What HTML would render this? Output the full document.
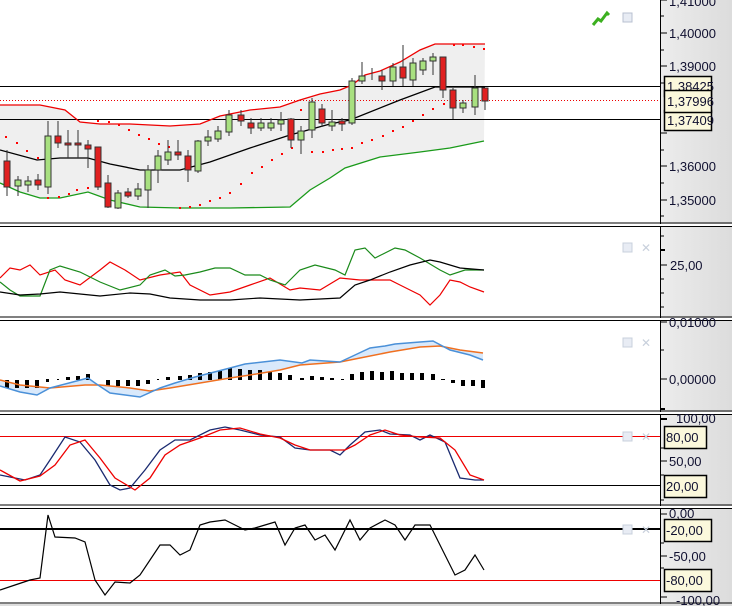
<!DOCTYPE html>
<html><head><meta charset="utf-8"><style>
html,body{margin:0;padding:0;background:#fff;width:732px;height:606px;overflow:hidden}
svg{display:block}
text{font-family:"Liberation Sans",sans-serif;font-size:13px;fill:#101030}
</style></head><body>
<svg width="732" height="606" viewBox="0 0 732 606" xmlns="http://www.w3.org/2000/svg">
<defs>
<linearGradient id="ax" x1="0" y1="0" x2="1" y2="0"><stop offset="0" stop-color="#ececec"/><stop offset="1" stop-color="#dcdcdc"/></linearGradient>
</defs>
<rect x="0" y="0" width="732" height="606" fill="#fff"/>
<rect x="661" y="0" width="71" height="606" fill="url(#ax)"/>
<line x1="660.5" y1="0" x2="660.5" y2="606" stroke="#000"/>

<!-- PANEL 1 -->
<polygon fill="#efefef" points="0,105 40,105 65,110 80,122 100,124 130,124 170,126 200,124 220,116 250,110 280,107 300,100 320,94 340,90 352,85 365,75 380,71 400,62 420,50 435,44 485,44 484,141 450,148 420,152 380,157 345,168 330,178 310,190 290,207 250,207 230,208 180,208 140,207 110,200 88,192 60,198 40,198 20,192 0,183"/>
<line x1="0" y1="86.5" x2="660" y2="86.5" stroke="#000"/>
<line x1="0" y1="119.5" x2="660" y2="119.5" stroke="#000"/>
<line x1="0" y1="100.5" x2="660" y2="100.5" stroke="#e00" stroke-dasharray="1,2"/>
<polyline fill="none" stroke="#e00" stroke-width="1.3" points="0,105 40,105 65,110 80,122 100,124 130,124 170,126 200,124 220,116 250,110 280,107 300,100 320,94 340,90 352,85 365,75 380,71 400,62 420,50 435,44 485,44"/>
<polyline fill="none" stroke="#000" stroke-width="1.3" points="0,150 37,160 60,158 88,158 110,164 140,170 180,170 210,162 250,148 290,135 330,124 350,120 400,100 435,87 485,87"/>
<polyline fill="none" stroke="#1a9a1a" stroke-width="1.3" points="0,183 20,192 40,198 60,198 88,192 110,200 140,207 180,208 230,208 290,207 310,190 330,178 345,168 380,157 420,152 450,148 484,141"/>
<g fill="#f00">
<rect x="5" y="136" width="2" height="2"/><rect x="16" y="142" width="2" height="2"/><rect x="26" y="150" width="2" height="2"/><rect x="37" y="157" width="2" height="2"/><rect x="47" y="197" width="2" height="2"/><rect x="58" y="196" width="2" height="2"/><rect x="68" y="193" width="2" height="2"/><rect x="76" y="189" width="2" height="2"/><rect x="87" y="187" width="2" height="2"/><rect x="97" y="120" width="2" height="2"/><rect x="108" y="121" width="2" height="2"/><rect x="118" y="124" width="2" height="2"/><rect x="128" y="129" width="2" height="2"/><rect x="138" y="134" width="2" height="2"/><rect x="148" y="138" width="2" height="2"/><rect x="158" y="143" width="2" height="2"/><rect x="168" y="146" width="2" height="2"/><rect x="179" y="207" width="2" height="2"/><rect x="189" y="206" width="2" height="2"/><rect x="199" y="204" width="2" height="2"/><rect x="209" y="200" width="2" height="2"/><rect x="219" y="197" width="2" height="2"/><rect x="229" y="192" width="2" height="2"/><rect x="240" y="183" width="2" height="2"/><rect x="251" y="172" width="2" height="2"/><rect x="261" y="166" width="2" height="2"/><rect x="271" y="159" width="2" height="2"/><rect x="281" y="153" width="2" height="2"/><rect x="291" y="147" width="2" height="2"/><rect x="300" y="109" width="2" height="2"/><rect x="311" y="151" width="2" height="2"/><rect x="322" y="151" width="2" height="2"/><rect x="332" y="149" width="2" height="2"/><rect x="341" y="148" width="2" height="2"/><rect x="351" y="147" width="2" height="2"/><rect x="361" y="142" width="2" height="2"/><rect x="371" y="139" width="2" height="2"/><rect x="382" y="135" width="2" height="2"/><rect x="392" y="130" width="2" height="2"/><rect x="402" y="126" width="2" height="2"/><rect x="412" y="120" width="2" height="2"/><rect x="422" y="114" width="2" height="2"/><rect x="432" y="108" width="2" height="2"/><rect x="443" y="103" width="2" height="2"/><rect x="453" y="44" width="2" height="2"/><rect x="462" y="44" width="2" height="2"/><rect x="473" y="46" width="2" height="2"/><rect x="483" y="48" width="2" height="2"/>
</g>
<g stroke="#333" stroke-width="1">
<!-- x, wickTop, wickBot, bodyTop, bodyBot, color -->
<line x1="7" y1="150" x2="7" y2="196"/><rect x="4" y="161" width="6" height="26" fill="#e02020"/>
<line x1="18" y1="176" x2="18" y2="196"/><rect x="15" y="180" width="6" height="6" fill="#a8e080"/>
<line x1="28" y1="176" x2="28" y2="192"/><rect x="25" y="181" width="6" height="4" fill="#a8e080"/>
<line x1="38" y1="174" x2="38" y2="190"/><rect x="35" y="180" width="6" height="5" fill="#e02020"/>
<line x1="48" y1="121" x2="48" y2="194"/><rect x="45" y="136" width="6" height="51" fill="#a8e080"/>
<line x1="58" y1="121" x2="58" y2="148"/><rect x="55" y="136" width="6" height="7" fill="#e02020"/>
<line x1="68" y1="130" x2="68" y2="158"/><rect x="65" y="143" width="6" height="2" fill="#e02020"/>
<line x1="78" y1="130" x2="78" y2="158"/><rect x="75" y="143" width="6" height="2" fill="#e02020"/>
<line x1="88" y1="140" x2="88" y2="168"/><rect x="85" y="145" width="6" height="4" fill="#e02020"/>
<line x1="98" y1="147" x2="98" y2="190"/><rect x="95" y="147" width="6" height="40" fill="#e02020"/>
<line x1="108" y1="175" x2="108" y2="208"/><rect x="105" y="183" width="6" height="24" fill="#e02020"/>
<line x1="118" y1="190" x2="118" y2="209"/><rect x="115" y="193" width="6" height="15" fill="#a8e080"/>
<line x1="128" y1="188" x2="128" y2="198"/><rect x="125" y="192" width="6" height="4" fill="#e02020"/>
<line x1="138" y1="183" x2="138" y2="200"/><rect x="135" y="189" width="6" height="7" fill="#a8e080"/>
<line x1="148" y1="165" x2="148" y2="208"/><rect x="145" y="170" width="6" height="20" fill="#a8e080"/>
<line x1="158" y1="150" x2="158" y2="183"/><rect x="155" y="156" width="6" height="14" fill="#a8e080"/>
<line x1="168" y1="140" x2="168" y2="165"/><rect x="165" y="152" width="6" height="8" fill="#a8e080"/>
<line x1="178" y1="140" x2="178" y2="160"/><rect x="175" y="152" width="6" height="3" fill="#e02020"/>
<line x1="188" y1="150" x2="188" y2="182"/><rect x="185" y="156" width="6" height="14" fill="#e02020"/>
<line x1="198" y1="140" x2="198" y2="173"/><rect x="195" y="141" width="6" height="30" fill="#a8e080"/>
<line x1="208" y1="130" x2="208" y2="146"/><rect x="205" y="137" width="6" height="4" fill="#a8e080"/>
<line x1="218" y1="126" x2="218" y2="142"/><rect x="215" y="131" width="6" height="8" fill="#a8e080"/>
<line x1="229" y1="110" x2="229" y2="136"/><rect x="226" y="115" width="6" height="17" fill="#a8e080"/>
<line x1="241" y1="110" x2="241" y2="126"/><rect x="238" y="115" width="6" height="6" fill="#e02020"/>
<line x1="251" y1="118" x2="251" y2="134"/><rect x="248" y="123" width="6" height="5" fill="#e02020"/>
<line x1="261" y1="118" x2="261" y2="131"/><rect x="258" y="123" width="6" height="5" fill="#a8e080"/>
<line x1="271" y1="118" x2="271" y2="131"/><rect x="268" y="123" width="6" height="5" fill="#a8e080"/>
<line x1="281" y1="112" x2="281" y2="131"/><rect x="278" y="120" width="6" height="4" fill="#a8e080"/>
<line x1="291" y1="118" x2="291" y2="148"/><rect x="288" y="119" width="6" height="21" fill="#e02020"/>
<line x1="301" y1="126" x2="301" y2="154"/><rect x="298" y="131" width="6" height="9" fill="#a8e080"/>
<line x1="312" y1="98" x2="312" y2="138"/><rect x="309" y="102" width="6" height="28" fill="#a8e080"/>
<line x1="322" y1="104" x2="322" y2="127"/><rect x="319" y="109" width="6" height="14" fill="#e02020"/>
<line x1="332" y1="110" x2="332" y2="131"/><rect x="329" y="122" width="6" height="4" fill="#a8e080"/>
<line x1="342" y1="118" x2="342" y2="131"/><rect x="339" y="121" width="6" height="3" fill="#e02020"/>
<line x1="352" y1="78" x2="352" y2="125"/><rect x="349" y="81" width="6" height="42" fill="#a8e080"/>
<line x1="362" y1="62" x2="362" y2="84"/><rect x="359" y="76" width="6" height="5" fill="#a8e080"/>
<line x1="372" y1="68" x2="372" y2="80"/>
<line x1="382" y1="70" x2="382" y2="90"/><rect x="379" y="76" width="6" height="5" fill="#e02020"/>
<line x1="393" y1="63" x2="393" y2="86"/><rect x="390" y="67" width="6" height="14" fill="#a8e080"/>
<line x1="403" y1="45" x2="403" y2="86"/><rect x="400" y="67" width="6" height="11" fill="#e02020"/>
<line x1="413" y1="58" x2="413" y2="86"/><rect x="410" y="63" width="6" height="17" fill="#a8e080"/>
<line x1="423" y1="58" x2="423" y2="75"/><rect x="420" y="61" width="6" height="9" fill="#a8e080"/>
<line x1="433" y1="53" x2="433" y2="75"/><rect x="430" y="57" width="6" height="4" fill="#a8e080"/>
<line x1="443" y1="57" x2="443" y2="98"/><rect x="440" y="57" width="6" height="33" fill="#e02020"/>
<line x1="453" y1="88" x2="453" y2="119"/><rect x="450" y="90" width="6" height="18" fill="#e02020"/>
<line x1="463" y1="100" x2="463" y2="113"/><rect x="460" y="103" width="6" height="5" fill="#a8e080"/>
<line x1="475" y1="75" x2="475" y2="115"/><rect x="472" y="88" width="6" height="19" fill="#a8e080"/>
<line x1="485" y1="88" x2="485" y2="110"/><rect x="482" y="88" width="6" height="13" fill="#e02020"/>
</g>
<!-- icon -->
<path d="M593,25 L598,19 L601,21 L607,13 L609,15" fill="none" stroke="#3cb020" stroke-width="3"/>
<rect x="623" y="13" width="9" height="9" fill="#e8ecf4" stroke="#b8c0d0"/>
<!-- axis 1 -->
<g stroke="#000">
<line x1="661" y1="0" x2="667" y2="0"/><line x1="661" y1="16" x2="664" y2="16"/><line x1="661" y1="33" x2="667" y2="33"/><line x1="661" y1="50" x2="664" y2="50"/><line x1="661" y1="66" x2="667" y2="66"/><line x1="661" y1="83" x2="664" y2="83"/><line x1="661" y1="133" x2="667" y2="133"/><line x1="661" y1="150" x2="664" y2="150"/><line x1="661" y1="166" x2="667" y2="166"/><line x1="661" y1="183" x2="664" y2="183"/><line x1="661" y1="200" x2="667" y2="200"/><line x1="661" y1="216" x2="664" y2="216"/>
</g>
<text x="669" y="6">1,41000</text>
<text x="669" y="38">1,40000</text>
<text x="669" y="71">1,39000</text>
<text x="669" y="171">1,36000</text>
<text x="669" y="205">1,35000</text>
<rect x="664.5" y="76.5" width="47" height="20" fill="#fbf8dc" stroke="#000" stroke-width="1.5"/>
<text x="667" y="91">1,38425</text>
<rect x="664.5" y="110.5" width="47" height="20" fill="#fbf8dc" stroke="#000" stroke-width="1.5"/>
<text x="667" y="125">1,37409</text>
<rect x="664.5" y="90.5" width="47" height="22" fill="#fbf8dc" stroke="#000" stroke-width="1.5"/>
<text x="667" y="106">1,37996</text>

<!-- separators -->
<g stroke="#000">
<line x1="0" y1="223" x2="732" y2="223"/><line x1="0" y1="226.5" x2="732" y2="226.5"/>
<line x1="0" y1="317" x2="732" y2="317"/><line x1="0" y1="320.5" x2="732" y2="320.5"/>
<line x1="0" y1="411" x2="732" y2="411"/><line x1="0" y1="414.5" x2="732" y2="414.5"/>
<line x1="0" y1="505" x2="732" y2="505"/><line x1="0" y1="508.5" x2="732" y2="508.5"/>
<line x1="0" y1="603" x2="732" y2="603"/>
</g>
<rect x="0" y="224" width="732" height="2" fill="#fff"/>
<rect x="0" y="318" width="732" height="2" fill="#fff"/>
<rect x="0" y="412" width="732" height="2" fill="#fff"/>
<rect x="0" y="506" width="732" height="2" fill="#fff"/>
<rect x="0" y="604" width="732" height="2" fill="#ddd"/>

<!-- PANEL 2 -->
<polyline fill="none" stroke="#e00" stroke-width="1.2" points="0,278 10,268 20,270 30,265 40,275 55,270 65,280 80,285 100,270 110,262 125,270 140,280 160,275 180,272 190,285 210,295 230,292 250,285 270,278 290,290 300,288 320,290 340,278 360,280 390,280 400,285 410,290 420,295 430,305 440,295 450,280 460,282 470,287 484,292"/>
<polyline fill="none" stroke="#1a8a1a" stroke-width="1.2" points="0,282 10,290 20,296 40,296 50,270 60,266 80,272 100,282 120,290 140,285 150,275 165,270 175,276 185,275 200,272 215,268 230,268 245,275 260,275 270,280 285,285 300,270 315,265 335,270 345,275 355,250 365,248 375,258 395,248 405,250 420,258 440,270 450,275 465,270 484,270"/>
<polyline fill="none" stroke="#000" stroke-width="1.2" points="0,292 20,295 40,294 60,292 80,294 100,296 130,293 150,294 170,298 200,300 230,300 260,298 300,300 340,298 355,285 370,280 390,272 410,265 430,260 440,262 460,268 484,270"/>
<rect x="623" y="243" width="9" height="9" fill="#e8ecf4" stroke="#c8d0dc"/>
<text x="641" y="252" style="font-size:12px;fill:#c8d0dc">✕</text>
<g stroke="#000"><line x1="661" y1="236" x2="664" y2="236"/><line x1="661" y1="250" x2="665" y2="250" stroke-width="2"/><line x1="661" y1="265" x2="667" y2="265"/><line x1="661" y1="279" x2="664" y2="279"/><line x1="661" y1="293" x2="664" y2="293"/><line x1="661" y1="307" x2="664" y2="307"/></g>
<text x="670" y="270">25,00</text>

<!-- PANEL 3 -->
<polygon fill="#cfe4fa" opacity="0.8" points="0,386 20,392 37,395 50,388 88,378 95,383 110,393 140,397 160,388 175,383 195,377 230,368 245,364 280,360 302,363 310,360 340,362 355,355 370,348 385,346 395,344 420,342 433,341 450,350 470,355 483,360 483,353 460,350 440,346 420,347 390,352 360,358 340,362 300,365 280,370 250,375 230,378 200,383 170,388 150,391 130,388 100,385 85,385 50,388 20,385 0,380"/>
<g fill="#000">
<rect x="5" y="380" width="4" height="8"/><rect x="15" y="380" width="4" height="8"/><rect x="25" y="380" width="4" height="8"/><rect x="35" y="380" width="4" height="8"/><rect x="46" y="379" width="3" height="3"/><rect x="57" y="379" width="2" height="1"/><rect x="66" y="377" width="4" height="3"/><rect x="76" y="376" width="4" height="4"/><rect x="86" y="374" width="4" height="6"/><rect x="106" y="380" width="4" height="6"/><rect x="116" y="380" width="4" height="6"/><rect x="126" y="380" width="4" height="6"/><rect x="136" y="380" width="4" height="6"/><rect x="146" y="380" width="4" height="4"/><rect x="157" y="379" width="2" height="1"/><rect x="166" y="377" width="4" height="3"/><rect x="178" y="376" width="4" height="4"/><rect x="188" y="375" width="4" height="5"/><rect x="198" y="373" width="4" height="7"/><rect x="208" y="372" width="4" height="8"/><rect x="218" y="371" width="4" height="9"/><rect x="228" y="368" width="4" height="12"/><rect x="238" y="369" width="4" height="11"/><rect x="248" y="370" width="4" height="10"/><rect x="258" y="370" width="4" height="10"/><rect x="268" y="372" width="4" height="8"/><rect x="278" y="373" width="4" height="7"/><rect x="288" y="375" width="4" height="5"/><rect x="300" y="378" width="4" height="2"/><rect x="310" y="376" width="4" height="4"/><rect x="320" y="377" width="4" height="3"/><rect x="330" y="378" width="4" height="2"/><rect x="341" y="379" width="3" height="1"/><rect x="350" y="374" width="4" height="6"/><rect x="360" y="372" width="4" height="8"/><rect x="370" y="371" width="4" height="9"/><rect x="380" y="372" width="4" height="8"/><rect x="390" y="371" width="4" height="9"/><rect x="400" y="373" width="4" height="7"/><rect x="410" y="373" width="4" height="7"/><rect x="420" y="373" width="4" height="7"/><rect x="431" y="374" width="4" height="6"/><rect x="441" y="379" width="4" height="1"/><rect x="451" y="380" width="4" height="3"/><rect x="461" y="380" width="4" height="6"/><rect x="471" y="380" width="4" height="6"/><rect x="481" y="380" width="4" height="8"/>
</g>
<polyline fill="none" stroke="#f07020" stroke-width="1.5" points="0,380 20,385 50,388 85,385 100,385 130,388 150,391 170,388 200,383 230,378 250,375 280,370 300,365 340,362 360,358 390,352 420,347 440,346 460,350 483,353"/>
<polyline fill="none" stroke="#4a90d8" stroke-width="1.5" points="0,386 20,392 37,395 50,388 88,378 95,383 110,393 140,397 160,388 175,383 195,377 230,368 245,364 280,360 302,363 310,360 340,362 355,355 370,348 385,346 395,344 420,342 433,341 450,350 470,355 483,360"/>
<rect x="623" y="338" width="9" height="9" fill="#e8ecf4" stroke="#c8d0dc"/>
<text x="641" y="347" style="font-size:12px;fill:#c8d0dc">✕</text>
<g stroke="#000"><line x1="661" y1="322" x2="667" y2="322"/><line x1="661" y1="350" x2="664" y2="350"/><line x1="661" y1="379" x2="667" y2="379"/><line x1="661" y1="409" x2="665" y2="409" stroke-width="2"/></g>
<text x="669" y="327">0,01000</text>
<text x="669" y="384">0,00000</text>

<!-- PANEL 4 -->
<line x1="0" y1="436.5" x2="660" y2="436.5" stroke="#e00"/>
<line x1="0" y1="485.5" x2="660" y2="485.5" stroke="#000"/>
<polyline fill="none" stroke="#1a2a70" stroke-width="1.3" points="0,475 15,478 25,480 40,475 50,460 65,437 80,442 95,460 110,485 120,490 130,488 145,470 160,450 175,440 190,440 210,430 225,427 240,430 260,435 280,437 295,448 310,450 330,450 340,455 350,445 365,432 380,430 390,434 410,435 420,440 430,435 445,442 460,478 475,480 484,480"/>
<polyline fill="none" stroke="#e00" stroke-width="1.3" points="0,470 20,481 40,476 55,465 70,445 85,440 100,458 115,478 135,490 150,478 165,455 180,445 200,438 220,430 240,428 260,434 280,438 295,445 310,450 330,450 345,450 355,445 370,435 385,430 400,435 420,437 440,438 455,450 470,475 484,480"/>
<rect x="623" y="432" width="9" height="9" fill="#e8ecf4" stroke="#c8d0dc"/>
<text x="641" y="441" style="font-size:12px;fill:#c8d0dc">✕</text>
<g stroke="#000"><line x1="661" y1="419" x2="667" y2="419" stroke-width="2"/><line x1="661" y1="461" x2="667" y2="461"/><line x1="661" y1="448" x2="664" y2="448"/><line x1="661" y1="475" x2="664" y2="475"/><line x1="661" y1="500" x2="664" y2="500"/></g>
<text x="676" y="423">100,00</text>
<text x="669" y="466">50,00</text>
<rect x="664.5" y="426.5" width="42" height="22" fill="#fbf8dc" stroke="#000" stroke-width="1.5"/>
<text x="666" y="442">80,00</text>
<rect x="664.5" y="475.5" width="42" height="22" fill="#fbf8dc" stroke="#000" stroke-width="1.5"/>
<text x="666" y="491">20,00</text>

<!-- PANEL 5 -->
<line x1="0" y1="529" x2="660" y2="529" stroke="#000" stroke-width="2"/>
<line x1="0" y1="580.5" x2="660" y2="580.5" stroke="#e00"/>
<polyline fill="none" stroke="#000" stroke-width="1.2" points="0,590 15,585 30,580 40,578 48,515 55,537 75,538 85,542 95,580 105,595 115,582 130,583 140,575 150,560 160,545 170,545 180,555 190,550 200,525 210,522 225,520 235,525 245,530 255,528 265,525 275,522 285,545 295,528 305,525 315,540 325,535 335,550 350,520 360,540 370,528 385,520 395,525 405,540 415,525 430,525 440,545 455,575 465,570 475,555 484,570"/>
<rect x="623" y="525" width="9" height="9" fill="#e8ecf4" stroke="#c8d0dc"/>
<text x="641" y="534" style="font-size:12px;fill:#c8d0dc">✕</text>
<g stroke="#000"><line x1="661" y1="514" x2="667" y2="514"/><line x1="661" y1="556" x2="667" y2="556"/><line x1="661" y1="543" x2="664" y2="543"/><line x1="661" y1="568" x2="664" y2="568"/><line x1="661" y1="597" x2="667" y2="597"/></g>
<text x="669" y="518">0,00</text>
<text x="669" y="561">-50,00</text>
<text x="676" y="605">-100,00</text>
<rect x="664.5" y="519.5" width="47" height="22" fill="#fbf8dc" stroke="#000" stroke-width="1.5"/>
<text x="666" y="535">-20,00</text>
<rect x="664.5" y="569.5" width="47" height="22" fill="#fbf8dc" stroke="#000" stroke-width="1.5"/>
<text x="666" y="585">-80,00</text>
</svg>
</body></html>
